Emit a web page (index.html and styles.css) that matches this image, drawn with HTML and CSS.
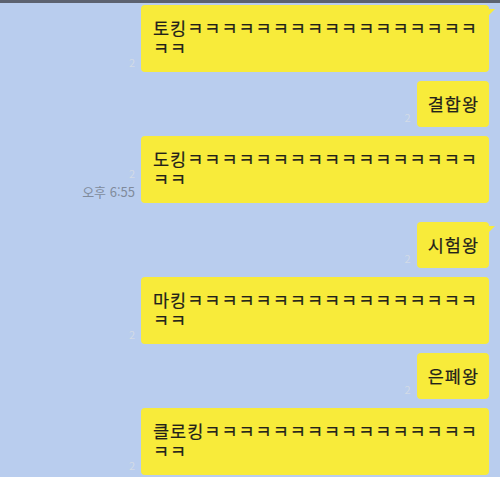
FILE: index.html
```html
<!DOCTYPE html>
<html lang="ko">
<head>
    <meta charset="UTF-8">
    <meta name="viewport" content="width=device-width, initial-scale=1.0">
    <title>채팅</title>
    <link rel="stylesheet" href="styles.css">
</head>
<body>
    <div class="topbar"></div>
    <div class="chat">
        <div class="row">
            <div class="meta"><span class="count">2</span></div>
            <div class="bubble tail">토킹ㅋㅋㅋㅋㅋㅋㅋㅋㅋㅋㅋㅋㅋㅋㅋㅋㅋㅋㅋ</div>
        </div>
        <div class="row">
            <div class="meta"><span class="count">2</span></div>
            <div class="bubble short">결합왕</div>
        </div>
        <div class="row">
            <div class="meta">
                <span class="count">2</span>
                <span class="time">오후 6:55</span>
            </div>
            <div class="bubble">도킹ㅋㅋㅋㅋㅋㅋㅋㅋㅋㅋㅋㅋㅋㅋㅋㅋㅋㅋㅋ</div>
        </div>
        <div class="row group">
            <div class="meta"><span class="count">2</span></div>
            <div class="bubble short tail">시험왕</div>
        </div>
        <div class="row">
            <div class="meta"><span class="count">2</span></div>
            <div class="bubble">마킹ㅋㅋㅋㅋㅋㅋㅋㅋㅋㅋㅋㅋㅋㅋㅋㅋㅋㅋㅋ</div>
        </div>
        <div class="row">
            <div class="meta"><span class="count">2</span></div>
            <div class="bubble short">은폐왕</div>
        </div>
        <div class="row">
            <div class="meta"><span class="count">2</span></div>
            <div class="bubble">클로킹ㅋㅋㅋㅋㅋㅋㅋㅋㅋㅋㅋㅋㅋㅋㅋㅋㅋㅋ</div>
        </div>
    </div>
</body>
</html>
```

FILE: styles.css
```css
html, body {
    margin: 0;
    height: 100%;
    overflow: hidden;
}
body {
    background-color: #b9cdee;
    font-family: "Noto Sans CJK KR", "Noto Sans", sans-serif;
    color: #22211a;
}
.topbar {
    height: 3px;
    background-color: #5c6270;
}
.chat {
    display: flex;
    flex-direction: column;
    gap: 9px;
    padding: 2px 11px 0 0;
}
.row {
    display: flex;
    justify-content: flex-end;
    align-items: flex-end;
    gap: 6px;
}
.row.group {
    margin-top: 10px;
}
.meta {
    display: flex;
    flex-direction: column;
    align-items: flex-end;
    padding-bottom: 4px;
}
.count {
    font-size: 11px;
    line-height: 12px;
    color: #d3dbe6;
}
.time {
    font-size: 13px;
    line-height: 15px;
    color: #808b9c;
    margin-top: 5px;
}
.bubble {
    position: relative;
    box-sizing: border-box;
    max-width: 348px;
    background-color: #f8eb3a;
    border-radius: 4px;
    padding: 13px 9px 14px 12px;
    font-size: 17.5px;
    line-height: 20px;
    letter-spacing: 1px;
    -webkit-text-stroke: 0.2px #22211a;
}
.bubble.short {
    padding: 13px 10px 13px 11px;
}
.tail::after {
    content: "";
    position: absolute;
    top: 4px;
    right: -6px;
    border-left: 7px solid #f8eb3a;
    border-bottom: 7px solid transparent;
}
```
